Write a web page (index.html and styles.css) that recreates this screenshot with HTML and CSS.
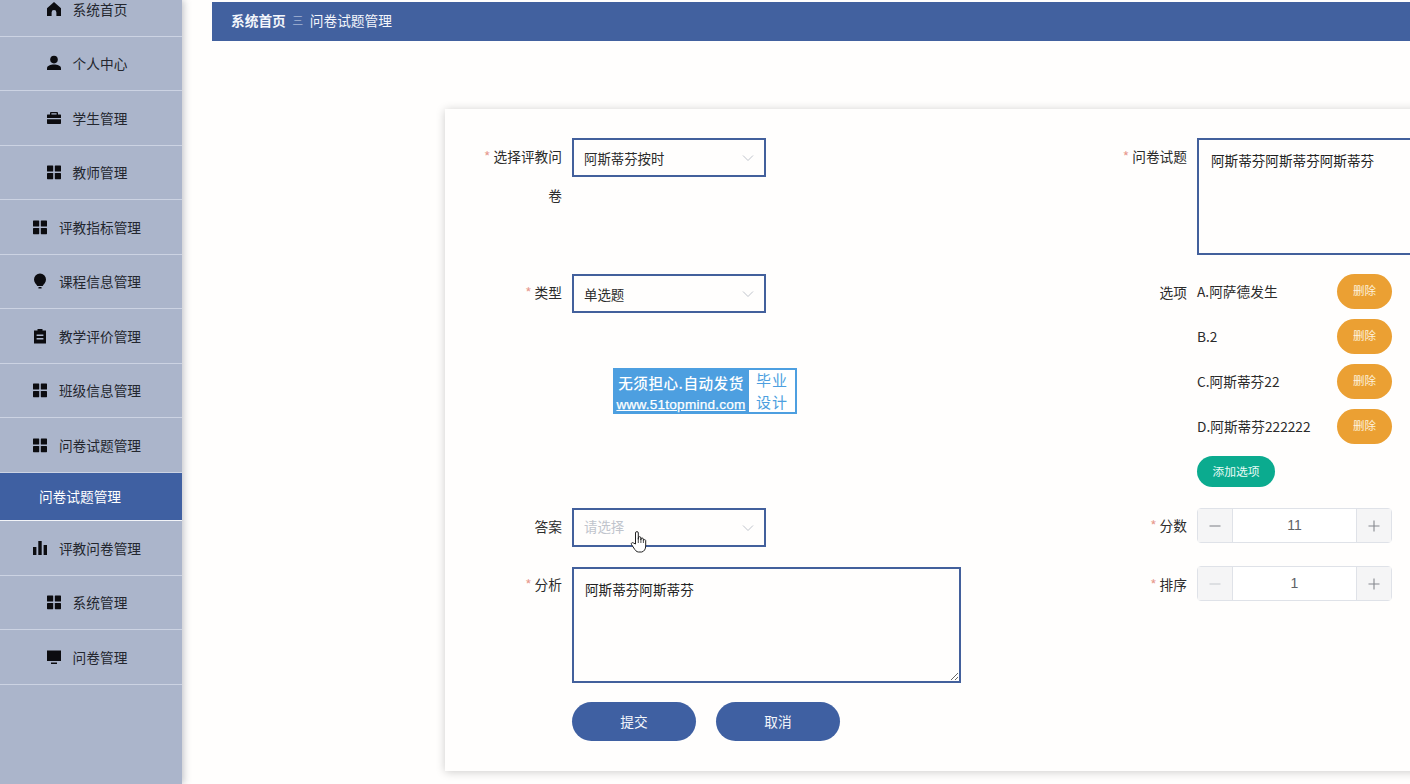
FILE: index.html
```html
<!DOCTYPE html>
<html lang="zh-CN">
<head>
<meta charset="utf-8">
<title>问卷试题管理</title>
<link rel="stylesheet" href="styles.css">
</head>
<body>
<svg class="defs" width="0" height="0" aria-hidden="true">
  <symbol id="i-home" viewBox="0 0 16 16"><path d="M8 1 15 7.200V15h-4.600v-3.600a2.400 2.400 0 0 0-4.800 0V15H1V7.200Z"/></symbol>
  <symbol id="i-user" viewBox="0 0 16 16"><circle cx="8" cy="4.600" r="3.800"/><path d="M1 15v-1.600C1 10.700 4.500 9.600 8 9.600s7 1.100 7 3.800V15Z"/></symbol>
  <symbol id="i-case" viewBox="0 0 16 16"><path d="M5 2h6a1 1 0 0 1 1 1v1.500h2.500a.8.800 0 0 1 .5.800V8H1V5.300a.8.800 0 0 1 .5-.8H4V3a1 1 0 0 1 1-1Zm.4 1.300v1.200h5.200V3.300ZM1 9.300h14v4a.8.800 0 0 1-.8.800H1.800a.8.800 0 0 1-.8-.8Z"/></symbol>
  <symbol id="i-grid" viewBox="0 0 16 16"><rect x="1" y="1.400" width="6.200" height="6.200" rx=".6"/><rect x="8.800" y="1.400" width="6.200" height="6.200" rx=".6"/><rect x="1" y="9" width="6.200" height="6.200" rx=".6"/><rect x="8.800" y="9" width="6.200" height="6.200" rx=".6"/></symbol>
  <symbol id="i-bulb" viewBox="0 0 16 16"><path d="M8 .6a6 6 0 0 1 6 6c0 3-2.200 4.600-3.300 6.400H5.300C4.200 11.200 2 9.600 2 6.600a6 6 0 0 1 6-6Z"/><rect x="6.400" y="14" width="3.200" height="1.400" rx=".5"/></symbol>
  <symbol id="i-clip" viewBox="0 0 16 16"><path fill-rule="evenodd" d="M5.500 1h5v1.500H14V15.500H2V2.500h3.500ZM4.600 6.500v1.500h6.800V6.500Zm0 3.600v1.500h6.800v-1.500Z"/></symbol>
  <symbol id="i-bars" viewBox="0 0 16 16"><rect x="1" y="7" width="3.400" height="8"/><rect x="6.300" y="1" width="3.400" height="14"/><rect x="11.600" y="5" width="3.400" height="10"/></symbol>
  <symbol id="i-screen" viewBox="0 0 16 16"><path d="M1 1.500h14V12H1Z"/><path d="M5 13.500h6V15H5Z"/></symbol>
  <symbol id="i-chev" viewBox="0 0 12 8"><path d="M1 1.500 6 6.500 11 1.500" fill="none" stroke="#c0c4cc" stroke-width="1"/></symbol>
  <symbol id="i-minus" viewBox="0 0 12 12"><path d="M.5 6h11" fill="none" stroke="currentColor" stroke-width="1.100"/></symbol>
  <symbol id="i-plus" viewBox="0 0 12 12"><path d="M.5 6h11M6 .5v11" fill="none" stroke="currentColor" stroke-width="1.100"/></symbol>
</svg>

<div class="app">
  <aside class="sidebar">
    <nav class="menu">
      <div class="menu-item"><svg class="icon"><use href="#i-home"/></svg><span>系统首页</span></div>
      <div class="menu-item"><svg class="icon"><use href="#i-user"/></svg><span>个人中心</span></div>
      <div class="menu-item"><svg class="icon"><use href="#i-case"/></svg><span>学生管理</span></div>
      <div class="menu-item"><svg class="icon"><use href="#i-grid"/></svg><span>教师管理</span></div>
      <div class="menu-item"><svg class="icon"><use href="#i-grid"/></svg><span>评教指标管理</span></div>
      <div class="menu-item"><svg class="icon"><use href="#i-bulb"/></svg><span>课程信息管理</span></div>
      <div class="menu-item"><svg class="icon"><use href="#i-clip"/></svg><span>教学评价管理</span></div>
      <div class="menu-item"><svg class="icon"><use href="#i-grid"/></svg><span>班级信息管理</span></div>
      <div class="menu-item"><svg class="icon"><use href="#i-grid"/></svg><span>问卷试题管理</span></div>
      <div class="menu-sub">问卷试题管理</div>
      <div class="menu-item"><svg class="icon"><use href="#i-bars"/></svg><span>评教问卷管理</span></div>
      <div class="menu-item"><svg class="icon"><use href="#i-grid"/></svg><span>系统管理</span></div>
      <div class="menu-item"><svg class="icon"><use href="#i-screen"/></svg><span>问卷管理</span></div>
    </nav>
  </aside>

  <main class="main">
    <div class="crumb">
      <strong>系统首页</strong><span class="crumb-sep">三</span><span>问卷试题管理</span>
    </div>

    <section class="card">
      <form class="form">
        <div class="field">
          <label class="label"><i>*</i> 选择评教问卷</label>
          <div class="select"><span>阿斯蒂芬按时</span><svg class="chev"><use href="#i-chev"/></svg></div>
        </div>
        <div class="field">
          <label class="label"><i>*</i> 问卷试题</label>
          <textarea class="area area-wide" readonly>阿斯蒂芬阿斯蒂芬阿斯蒂芬</textarea>
        </div>

        <div class="field">
          <label class="label"><i>*</i> 类型</label>
          <div class="select"><span>单选题</span><svg class="chev"><use href="#i-chev"/></svg></div>
        </div>
        <div class="field">
          <label class="label">选项</label>
          <div class="options">
            <div class="option"><span>A.阿萨德发生</span><button type="button" class="btn-del">删除</button></div>
            <div class="option"><span>B.2</span><button type="button" class="btn-del">删除</button></div>
            <div class="option"><span>C.阿斯蒂芬22</span><button type="button" class="btn-del">删除</button></div>
            <div class="option"><span>D.阿斯蒂芬222222</span><button type="button" class="btn-del">删除</button></div>
            <button type="button" class="btn-add">添加选项</button>
          </div>
        </div>

        <div class="field">
          <label class="label">答案</label>
          <div class="select"><span class="placeholder">请选择</span><svg class="chev"><use href="#i-chev"/></svg></div>
        </div>
        <div class="field">
          <label class="label label-short"><i>*</i> 分数</label>
          <div class="number"><span class="step"><svg class="step-icon"><use href="#i-minus"/></svg></span><span class="value">11</span><span class="step"><svg class="step-icon"><use href="#i-plus"/></svg></span></div>
        </div>

        <div class="field">
          <label class="label label-short"><i>*</i> 分析</label>
          <textarea class="area" readonly>阿斯蒂芬阿斯蒂芬</textarea>
        </div>
        <div class="field">
          <label class="label label-short"><i>*</i> 排序</label>
          <div class="number number-up"><span class="step step-off"><svg class="step-icon"><use href="#i-minus"/></svg></span><span class="value">1</span><span class="step"><svg class="step-icon"><use href="#i-plus"/></svg></span></div>
        </div>

        <div class="actions">
          <button type="button" class="btn-main">提交</button>
          <button type="button" class="btn-main">取消</button>
        </div>
      </form>
    </section>
  </main>
</div>

<div class="badge">
  <div class="badge-left"><div class="badge-title">无须担心.自动发货</div><div class="badge-url">www.51topmind.com</div></div>
  <div class="badge-right"><div>毕业</div><div>设计</div></div>
</div>

<svg class="cursor" viewBox="0 0 17 23" width="17" height="23">
  <path d="M5.500 14V3a1.400 1.400 0 0 1 2.800 0v6.500V8a1.300 1.300 0 0 1 2.600 0v2V9a1.300 1.300 0 0 1 2.500 0v1.500a1.200 1.200 0 0 1 2.300 0V16c0 3-1.500 5.500-4 6H8.500C6.500 22 5 20 3.800 18L1.500 14.500c-.8-1.300.8-2.500 2-1.500Z" fill="#fff" stroke="#222" stroke-width="1" stroke-linejoin="round"/>
  <path d="M8.300 9.500V13M10.900 10v3M13.400 10.500V13" stroke="#222" stroke-width=".8" fill="none"/>
</svg>
</body>
</html>
```
FILE: styles.css
```css
* { box-sizing: border-box; }
html, body { margin: 0; height: 100%; overflow: hidden; }
body {
  font-family: "Noto Sans CJK SC", "Noto Sans", sans-serif;
  font-size: 13.7px;
  color: #2b2b2b;
  background: #fffefd;
}
.defs { position: absolute; }

.app { display: flex; height: 784px; overflow: hidden; }

.sidebar {
  flex: 0 0 182px;
  background: #abb5cb;
  box-shadow: 2px 0 7px rgba(60, 70, 90, .3);
  position: relative;
  z-index: 2;
}
.menu { margin-top: -18px; display: flex; flex-direction: column; }
.menu-item {
  height: 54.5px;
  display: flex;
  align-items: center;
  justify-content: center;
  gap: 11px;
  padding-right: 9px;
  border-bottom: 1px solid #ccd3e3;
  color: #23262e;
}
.icon { width: 16px; height: 16px; fill: #0c0c10; flex: none; }
.menu-sub {
  height: 48.5px;
  padding: 0 22px 1px 0;
  display: flex;
  align-items: center;
  justify-content: center;
  background: #3f60a2;
  color: #fff;
  border-bottom: 1.5px solid #f2f4f8;
}

.main { flex: 1; min-width: 0; padding: 2px 0 0 30px; overflow: hidden; }
.crumb {
  height: 39px;
  display: flex;
  align-items: center;
  gap: 6.5px;
  padding: 0 0 3px 19px;
  background: #42619f;
  color: #f4f6fb;
}
.crumb strong { font-weight: 700; }
.crumb-sep { font-size: 11px; font-weight: 300; color: #cfd8ea; }

.card {
  width: 1100px;
  height: 662px;
  margin: 68px 0 0 233px;
  padding: 29px 0 0 27px;
  background: #fffefd;
  box-shadow: 0 1px 9px rgba(0, 0, 0, .2);
}
.form {
  display: grid;
  grid-template-columns: 625px 1fr;
  grid-template-rows: 117px 215px 40px 116px auto;
  row-gap: 19px;
}
.field { display: flex; align-items: flex-start; }
.label {
  flex: 0 0 100px;
  margin-top: -1px;
  padding-right: 10px;
  text-align: right;
  line-height: 39px;
  color: #2b2b2b;
}
.label-short { line-height: 36px; }
.label i { color: #e79a8f; font-style: normal; }

.select {
  width: 194px;
  height: 39px;
  display: flex;
  align-items: center;
  justify-content: space-between;
  padding: 0 10px 0 10px;
  border: 2px solid #43609c;
  background: #fffefd;
  font-size: 13.4px;
}
.placeholder { color: #c0c4cc; margin-top: -3px; }
.chev { width: 12px; height: 8px; }

.area {
  display: block;
  width: 389px;
  height: 116px;
  padding: 10px 11px;
  border: 2px solid #43609c;
  border-radius: 0;
  outline: 0;
  background: #fffefd;
  font: inherit;
  font-size: 13.6px;
  line-height: 20px;
  color: #222;
}
.area-wide { height: 117px; resize: none; padding-left: 12px; }

.options { width: 195px; display: flex; flex-direction: column; align-items: flex-start; gap: 10px; }
.option { width: 100%; height: 35px; display: flex; align-items: center; justify-content: space-between; }
.option span { margin-top: -2px; }
.btn-del {
  width: 55px;
  height: 35px;
  padding: 0 0 3px;
  border: 0;
  border-radius: 18px;
  background: #eba033;
  color: #fdf2de;
  font: inherit;
  font-size: 11.5px;
}
.btn-add {
  width: 78px;
  height: 31px;
  margin-top: 2px;
  padding: 0 0 2px;
  border: 0;
  border-radius: 16px;
  background: #0bab8f;
  color: #e8fbf6;
  font: inherit;
  font-size: 11.8px;
}

.number {
  width: 195px;
  height: 35px;
  display: flex;
  border: 1px solid #dfe2e8;
  border-radius: 4px;
  background: #fff;
  color: #606266;
}
.number-up { margin-top: -1px; }
.step {
  flex: 0 0 35px;
  display: flex;
  align-items: center;
  justify-content: center;
  background: #f5f5f6;
  color: #85888e;
}
.step-icon { width: 12px; height: 12px; }
.step:first-child { border-right: 1px solid #dfe2e8; }
.step:last-child { border-left: 1px solid #dfe2e8; }
.step-off { color: #c9ccd2; }
.value { flex: 1; display: flex; align-items: center; justify-content: center; font-family: "Liberation Sans", sans-serif; font-size: 14px; padding-bottom: 1px; }

.actions { grid-column: 1 / -1; display: flex; gap: 20px; padding-left: 100px; }
.btn-main {
  width: 124px;
  height: 39px;
  padding: 0 0 2px;
  border: 0;
  border-radius: 20px;
  background: #3f60a2;
  color: #f4f6fb;
  font: inherit;
}

.badge {
  position: absolute;
  left: 613px;
  top: 368px;
  width: 184px;
  height: 46px;
  display: flex;
  background: #4d9fe0;
  color: #fff;
  z-index: 3;
}
.badge-left { flex: 1; min-width: 0; text-align: center; }
.badge-title { font-size: 14.6px; font-weight: 500; line-height: 29px; letter-spacing: .5px; white-space: nowrap; }
.badge-url { font-family: "Liberation Sans", sans-serif; font-size: 13.6px; line-height: 15px; letter-spacing: .22px; white-space: nowrap; text-decoration: underline; text-underline-offset: 1px; -webkit-text-stroke: .25px #fff; }
.badge-right {
  flex: 0 0 46px;
  margin: 2px 2px 2px 0;
  display: flex;
  flex-direction: column;
  justify-content: center;
  background: #fff;
  color: #4d9fe0;
  text-align: center;
  font-size: 15px;
  line-height: 22px;
  letter-spacing: 1px;
}

.cursor { position: absolute; left: 630px; top: 530px; z-index: 4; }
```
